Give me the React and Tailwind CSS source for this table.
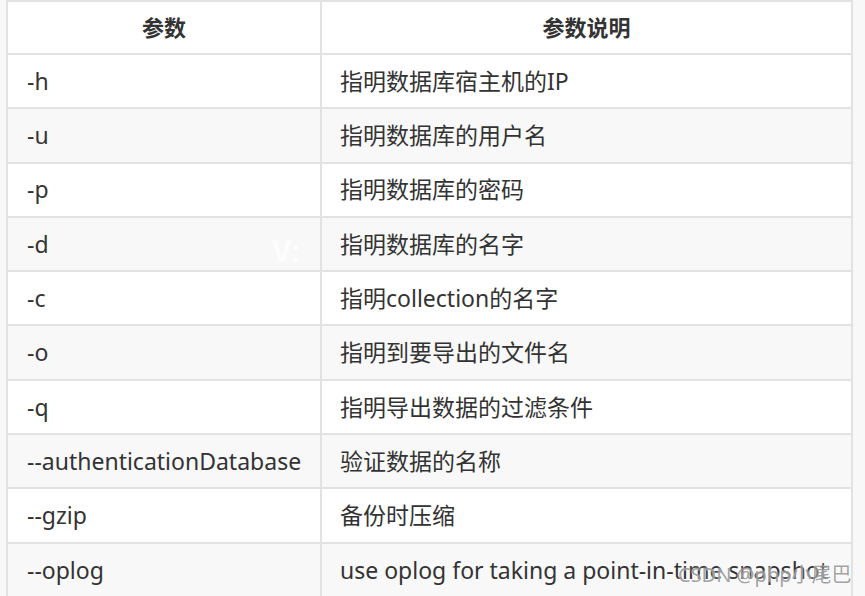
export default function App() {
  const rows = [
    ["-h", "指明数据库宿主机的IP"],
    ["-u", "指明数据库的用户名"],
    ["-p", "指明数据库的密码"],
    ["-d", "指明数据库的名字"],
    ["-c", "指明collection的名字"],
    ["-o", "指明到要导出的文件名"],
    ["-q", "指明导出数据的过滤条件"],
    ["--authenticationDatabase", "验证数据的名称"],
    ["--gzip", "备份时压缩"],
    ["--oplog", "use oplog for taking a point-in-time snapshot"],
  ];
  const font = {
    fontFamily: '"Noto Sans", "Noto Sans CJK SC", sans-serif',
  };
  return (
    <div
      className="relative w-[865px] h-[596px] overflow-hidden bg-[#f8f8f8] text-[#333333]"
      style={font}
    >
      <div className="ml-[6px] w-[847px] border-l-2 border-r-2 border-t-2 border-[#e2e2e2] bg-white">
        <div className="flex h-[53px] border-b-2 border-[#e2e2e2] bg-white font-bold text-[22px]">
          <div className="w-[314px] border-r-2 border-[#e2e2e2] flex items-center justify-center">
            参数
          </div>
          <div className="flex-1 flex items-center justify-center">参数说明</div>
        </div>
        {rows.map(([a, b], i) => (
          <div
            key={a}
            className={
              "flex h-[54.3px] border-b-2 border-[#e2e2e2] text-[23px] " +
              (i % 2 === 1 ? "bg-[#f8f8f8]" : "bg-white")
            }
          >
            <div className="w-[314px] border-r-2 border-[#e2e2e2] flex items-center pl-[19px] whitespace-nowrap">
              {a}
            </div>
            <div className="flex-1 flex items-center pl-[18px] whitespace-nowrap">
              {b}
            </div>
          </div>
        ))}
      </div>
      <div className="absolute left-[272px] top-[228px] text-[30px] font-bold text-[#fdfdfd]">
        V:
      </div>
      <div
        className="absolute left-[678px] top-[560px] text-[20px] text-[#8a8a8a]/80 whitespace-nowrap"
        style={{ textShadow: "0 0 2px #fff" }}
      >
        CSDN @php小尾巴
      </div>
    </div>
  );
}
